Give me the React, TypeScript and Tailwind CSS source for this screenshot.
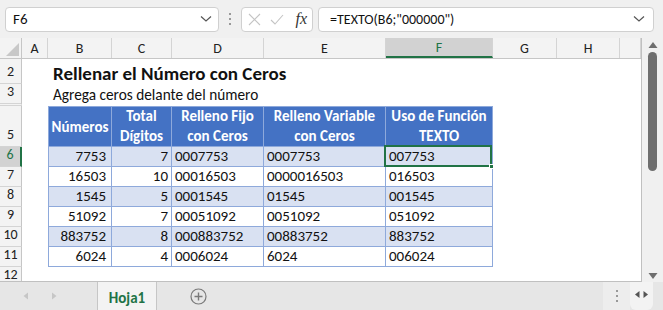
import React from 'react';

const cols = [
  { key: 'A', w: 'w-[26px]' },
  { key: 'B', w: 'w-[64px]' },
  { key: 'C', w: 'w-[60px]' },
  { key: 'D', w: 'w-[92px]' },
  { key: 'E', w: 'w-[122px]' },
  { key: 'F', w: 'w-[107px]' },
  { key: 'G', w: 'w-[64px]' },
  { key: 'H', w: 'w-[63px]' },
  { key: '', w: 'w-[21px]' },
];

const rows = [
  ['7753', '7', '0007753', '0007753', '007753'],
  ['16503', '10', '00016503', '0000016503', '016503'],
  ['1545', '5', '0001545', '01545', '001545'],
  ['51092', '7', '00051092', '0051092', '051092'],
  ['883752', '8', '000883752', '00883752', '883752'],
  ['6024', '4', '0006024', '6024', '006024'],
];

const font = { fontFamily: 'Carlito, Calibri, Lato, sans-serif' };

const RowHead: React.FC<{ n: string; h: string; selected?: boolean; double?: boolean }> = ({ n, h, selected, double }) => (
  <div
    className={`w-[22px] shrink-0 ${h} flex items-end justify-center pb-[1px] text-[14px] border-b border-[#d4d4d4] ${
      selected ? 'bg-[#d2d2d2] text-[#217346] border-r-2 border-r-[#217346]' : 'bg-[#f3f3f3] text-[#222] border-r border-r-[#c6c6c6]'
    } ${double ? 'border-b-[3px] border-double' : ''}`}
  >
    {n}
  </div>
);

const App: React.FC = () => {
  return (
    <div className="w-[663px] h-[310px] bg-[#e6e6e6] flex flex-col overflow-hidden text-[#111]" style={font}>
      {/* formula bar */}
      <div className="h-[38px] bg-[#f0f0f0] flex items-center px-[5px] gap-0 shrink-0">
        <div className="w-[214px] h-[25px] bg-white border border-[#d0d0d0] rounded-[4px] flex items-center justify-between pl-[7px] pr-[6px] text-[15px]">
          <span>F6</span>
          <svg width="12" height="8" viewBox="0 0 12 8"><path d="M1 1.5 L6 6 L11 1.5" fill="none" stroke="#555" strokeWidth="1.2" /></svg>
        </div>
        <div className="w-[22px] flex flex-col items-center gap-[3px]">
          <span className="w-[2px] h-[2px] bg-[#999]"></span>
          <span className="w-[2px] h-[2px] bg-[#999]"></span>
          <span className="w-[2px] h-[2px] bg-[#999]"></span>
        </div>
        <div className="w-[72px] h-[25px] bg-white border border-[#d0d0d0] rounded-[4px] flex items-center pl-[6px] pr-[5px] gap-[9px]">
          <svg width="13" height="13" viewBox="0 0 13 13"><path d="M1 1 L12 12 M12 1 L1 12" stroke="#c4c4c4" strokeWidth="1.1" /></svg>
          <svg width="14" height="11" viewBox="0 0 14 11"><path d="M1 6 L5 10 L13 1" fill="none" stroke="#c4c4c4" strokeWidth="1.1" /></svg>
          <span className="ml-auto text-[16px] italic text-[#333]" style={{ fontFamily: '"Liberation Serif", serif' }}>fx</span>
        </div>
        <div className="ml-[5px] flex-1 h-[25px] bg-white border border-[#d0d0d0] rounded-[4px] flex items-center justify-between pl-[11px] pr-[8px] text-[14px] mr-[4px]">
          <span>=TEXTO(B6;"000000")</span>
          <svg width="12" height="8" viewBox="0 0 12 8"><path d="M1 1.5 L6 6 L11 1.5" fill="none" stroke="#555" strokeWidth="1.2" /></svg>
        </div>
      </div>

      <div className="flex flex-1 min-h-0">
        {/* sheet */}
        <div className="w-[642px] flex flex-col bg-white border-r border-[#c0c0c0] border-b overflow-hidden">
          {/* column headers */}
          <div className="flex h-[21px] shrink-0 bg-[#f3f3f3] border-b border-[#c6c6c6]">
            <div className="w-[22px] shrink-0 border-r border-[#c6c6c6] flex items-end justify-end p-[2px]">
              <svg width="13" height="13" viewBox="0 0 13 13"><path d="M13 0 L13 13 L0 13 Z" fill="#c8c8c8" /></svg>
            </div>
            {cols.map((c) => (
              <div
                key={c.key + c.w}
                className={`${c.w} shrink-0 flex items-center justify-center text-[14px] border-r border-[#d4d4d4] ${
                  c.key === 'F' ? 'bg-[#d2d2d2] text-[#217346] border-b-2 border-b-[#217346]' : 'text-[#222]'
                }`}
              >
                {c.key}
              </div>
            ))}
          </div>

          {/* row 2 */}
          <div className="flex h-[25px] shrink-0">
            <RowHead n="2" h="h-[25px]" />
            <div className="pl-[31px] pt-[1px] text-[19px] font-bold whitespace-nowrap">Rellenar el Número con Ceros</div>
          </div>
          {/* row 3 */}
          <div className="flex h-[22px] shrink-0">
            <RowHead n="3" h="h-[22px]" double />
            <div className="pl-[31px] text-[15.3px] whitespace-nowrap">Agrega ceros delante del número</div>
          </div>
          {/* row 5 header */}
          <div className="flex h-[41px] shrink-0">
            <RowHead n="5" h="h-[41px]" />
            <div className="w-[26px] shrink-0"></div>
            <div className="flex bg-[#4472c4] text-white font-bold text-[15px] leading-[20px] border border-[#8ea9db]">
              <div className="w-[63px] flex items-center justify-center pt-[1px] border-r border-[#8ea9db]">Números</div>
              <div className="w-[60px] flex flex-col items-center justify-end pb-[0px] border-r border-[#8ea9db]">
                <span>Total</span>
                <span>Dígitos</span>
              </div>
              <div className="w-[92px] flex flex-col items-center justify-end border-r border-[#8ea9db]">
                <span>Relleno Fijo</span>
                <span>con Ceros</span>
              </div>
              <div className="w-[122px] flex flex-col items-center justify-end border-r border-[#8ea9db]">
                <span>Relleno Variable</span>
                <span>con Ceros</span>
              </div>
              <div className="w-[106px] flex flex-col items-center justify-end">
                <span>Uso de Función</span>
                <span>TEXTO</span>
              </div>
            </div>
          </div>
          {rows.map((r, i) => (
            <div key={i} className="flex h-[20px] shrink-0">
              <RowHead n={String(i + 6)} h="h-[20px]" selected={i === 0} />
              <div className="w-[26px] shrink-0"></div>
              <div
                className={`flex text-[15px] leading-[19px] border-l border-r border-b border-[#8ea9db] ${
                  i % 2 === 0 ? 'bg-[#d9e1f2]' : 'bg-white'
                }`}
              >
                <div className="w-[63px] text-right pr-[5px] border-r border-[#8ea9db]">{r[0]}</div>
                <div className="w-[60px] text-right pr-[3px] border-r border-[#8ea9db]">{r[1]}</div>
                <div className="w-[92px] pl-[3px] border-r border-[#8ea9db]">{r[2]}</div>
                <div className="w-[122px] pl-[3px] border-r border-[#8ea9db]">{r[3]}</div>
                <div className="w-[106px] pl-[3px] relative">
                  {r[4]}
                  {i === 0 && (
                    <div className="absolute -left-[2px] -top-[2px] w-[108px] h-[22px] border-2 border-[#217346]">
                      <div className="absolute -right-[4px] -bottom-[4px] w-[5px] h-[5px] bg-[#217346] border border-white"></div>
                    </div>
                  )}
                </div>
              </div>
            </div>
          ))}
          <div className="flex h-[20px] shrink-0">
            <RowHead n="12" h="h-[20px]" />
          </div>
        </div>

        {/* vertical scrollbar */}
        <div className="flex-1 bg-[#f0f0f0] flex flex-col items-center pt-[3px] pb-[2px]">
          <svg width="10" height="8" viewBox="0 0 10 8"><path d="M5 1 L9.5 7 L0.5 7 Z" fill="#6e6e6e" /></svg>
          <div className="w-[9px] h-[119px] bg-[#6e6e6e] rounded-full mt-[3px]"></div>
          <div className="flex-1"></div>
          <svg width="10" height="8" viewBox="0 0 10 8"><path d="M0.5 1 L9.5 1 L5 7 Z" fill="#6e6e6e" /></svg>
        </div>
      </div>

      {/* sheet tabs */}
      <div className="h-[28px] shrink-0 flex items-stretch bg-[#e6e6e6]">
        <div className="w-[97px] flex items-center pl-[23px] gap-[22px]">
          <svg width="6" height="8" viewBox="0 0 6 8"><path d="M5 0.5 L5 7.5 L0.5 4 Z" fill="#c6c6c6" /></svg>
          <svg width="6" height="8" viewBox="0 0 6 8"><path d="M1 0.5 L1 7.5 L5.5 4 Z" fill="#c6c6c6" /></svg>
        </div>
        <div className="w-[60px] bg-[#f3f3f3] border-l border-r border-[#c6c6c6] flex flex-col items-center">
          <span className="mt-[5px] text-[15px] font-bold text-[#217346]">Hoja1</span>
          <span className="mt-auto mb-[2px] w-[58px] h-[2px] bg-[#217346]"></span>
        </div>
        <div className="flex items-center ml-[33px]">
          <svg width="17" height="17" viewBox="0 0 17 17">
            <circle cx="8.5" cy="8.5" r="7.5" fill="none" stroke="#7a7a7a" strokeWidth="1.2" />
            <path d="M8.5 4.5 L8.5 12.5 M4.5 8.5 L12.5 8.5" stroke="#7a7a7a" strokeWidth="1.4" />
          </svg>
        </div>
        <div className="flex-1"></div>
        <div className="w-[27px] bg-[#ededed] flex flex-col items-center justify-center gap-[3px]">
          <span className="w-[2px] h-[2px] bg-[#999]"></span>
          <span className="w-[2px] h-[2px] bg-[#999]"></span>
          <span className="w-[2px] h-[2px] bg-[#999]"></span>
        </div>
        <div className="w-[23px] bg-[#f3f3f3] rounded-b-[6px] flex items-start justify-center gap-[3px] pt-[9px] mr-[10px]">
          <svg width="5" height="7" viewBox="0 0 5 7"><path d="M4.5 0 L4.5 7 L0 3.5 Z" fill="#555" /></svg>
          <svg width="5" height="7" viewBox="0 0 5 7"><path d="M0.5 0 L0.5 7 L5 3.5 Z" fill="#555" /></svg>
        </div>
      </div>
    </div>
  );
};

export default App;
